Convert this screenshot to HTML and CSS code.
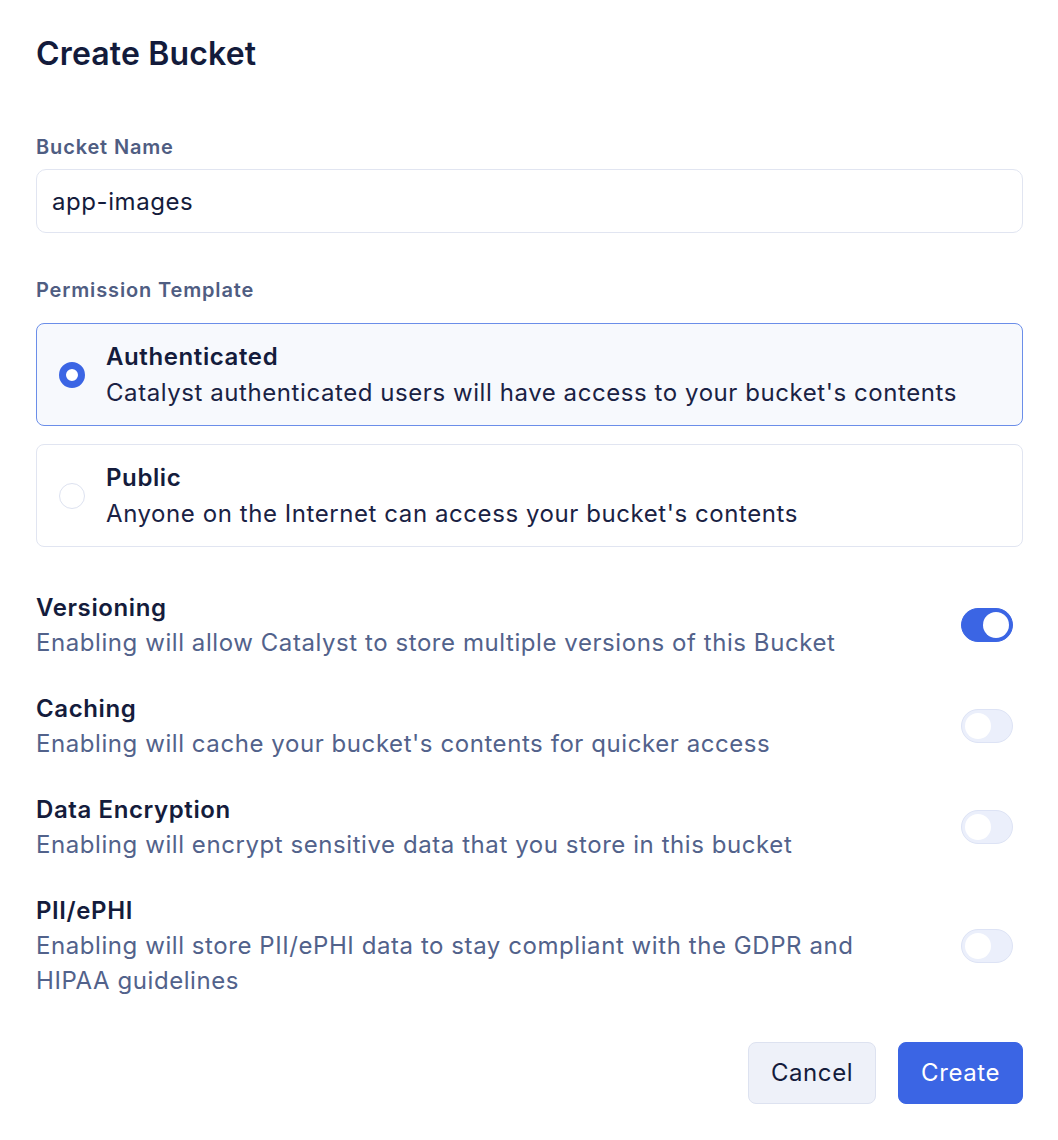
FILE: index.html
```html
<!DOCTYPE html>
<html lang="en">
<head>
  <meta charset="UTF-8">
  <meta name="viewport" content="width=device-width, initial-scale=1.0">
  <title>Create Bucket</title>
  <link rel="stylesheet" href="styles.css">
</head>
<body>
  <div class="dialog">
    <h1 class="title">Create Bucket</h1>

    <label class="field-label name-label" for="bucket-name">Bucket Name</label>
    <input class="text-input" id="bucket-name" type="text" value="app-images">

    <div class="field-label perm-label">Permission Template</div>
    <div class="options">
      <div class="option selected">
        <span class="radio"></span>
        <div class="option-text">
          <div class="option-title">Authenticated</div>
          <div class="option-desc">Catalyst authenticated users will have access to your bucket's contents</div>
        </div>
      </div>
      <div class="option">
        <span class="radio"></span>
        <div class="option-text">
          <div class="option-title">Public</div>
          <div class="option-desc">Anyone on the Internet can access your bucket's contents</div>
        </div>
      </div>
    </div>

    <div class="settings">
      <div class="setting">
        <div class="setting-text">
          <div class="setting-title">Versioning</div>
          <div class="setting-desc">Enabling will allow Catalyst to store multiple versions of this Bucket</div>
        </div>
        <span class="toggle on"><span class="knob"></span></span>
      </div>
      <div class="setting">
        <div class="setting-text">
          <div class="setting-title">Caching</div>
          <div class="setting-desc">Enabling will cache your bucket's contents for quicker access</div>
        </div>
        <span class="toggle"><span class="knob"></span></span>
      </div>
      <div class="setting">
        <div class="setting-text">
          <div class="setting-title">Data Encryption</div>
          <div class="setting-desc">Enabling will encrypt sensitive data that you store in this bucket</div>
        </div>
        <span class="toggle"><span class="knob"></span></span>
      </div>
      <div class="setting">
        <div class="setting-text">
          <div class="setting-title">PII/ePHI</div>
          <div class="setting-desc">Enabling will store PII/ePHI data to stay compliant with the GDPR and HIPAA guidelines</div>
        </div>
        <span class="toggle"><span class="knob"></span></span>
      </div>
    </div>

    <div class="actions">
      <button class="btn btn-cancel">Cancel</button>
      <button class="btn btn-create">Create</button>
    </div>
  </div>
</body>
</html>
```

FILE: styles.css
```css
body {
  margin: 0;
  background-color: #ffffff;
  font-family: Inter, "Noto Sans", sans-serif;
  color: #141c3c;
  letter-spacing: 0.57px;
}

.dialog {
  padding: 34px 35px 36px 36px;
}

.title {
  margin: 0 0 58px 0;
  font-size: 32px;
  line-height: 40px;
  font-weight: 600;
  letter-spacing: 0.15px;
  color: #131b3b;
}

.field-label {
  display: block;
  font-size: 20px;
  line-height: 30px;
  font-weight: 600;
  letter-spacing: 0.85px;
  color: #4f5d82;
}

.name-label {
  margin-top: 1px;
  margin-bottom: 7px;
}

.perm-label {
  margin-top: 42px;
  margin-bottom: 18px;
}

.text-input {
  display: block;
  box-sizing: border-box;
  width: 100%;
  height: 64px;
  margin: 0;
  padding: 13px 15px;
  font-family: inherit;
  font-size: 24px;
  line-height: 36px;
  letter-spacing: 0.57px;
  color: #141c3c;
  border: 1px solid #e1e5f1;
  border-radius: 10px;
  outline: none;
}

.options {
  display: flex;
  flex-direction: column;
  gap: 18px;
}

.option {
  display: flex;
  align-items: center;
  gap: 21px;
  padding: 15px 22px 14px 22px;
  border: 1px solid #e1e5f1;
  border-radius: 8px;
  background-color: #ffffff;
}

.option.selected {
  border-color: #6b8ee9;
  background-color: #f7f9fd;
}

.radio {
  flex: none;
  box-sizing: border-box;
  width: 26px;
  height: 26px;
  border-radius: 50%;
  border: 1px solid #dde2f0;
  background-color: #ffffff;
}

.option.selected .radio {
  border: 7px solid #3b65e4;
}

.option-title {
  font-size: 24px;
  line-height: 36px;
  font-weight: 600;
  letter-spacing: 0.6px;
  color: #141c3c;
}

.option-desc {
  font-size: 24px;
  line-height: 36px;
  color: #1a2244;
}

.settings {
  display: flex;
  flex-direction: column;
  gap: 31px;
  margin-top: 43px;
}

.setting {
  display: flex;
  align-items: center;
  justify-content: space-between;
  gap: 40px;
  padding-right: 10px;
}

.setting-title {
  font-size: 24px;
  line-height: 35px;
  font-weight: 600;
  letter-spacing: 0.6px;
  color: #141c3c;
}

.setting-desc {
  max-width: 840px;
  font-size: 24px;
  line-height: 35px;
  color: #52628b;
}

.toggle {
  flex: none;
  position: relative;
  box-sizing: border-box;
  width: 52px;
  height: 34px;
  border-radius: 17px;
  border: 1px solid #dde3f5;
  background-color: #ebeffb;
}

.toggle .knob {
  position: absolute;
  top: 3px;
  left: 3px;
  width: 26px;
  height: 26px;
  border-radius: 50%;
  background-color: #ffffff;
}

.toggle.on {
  border-color: #3b65e4;
  background-color: #3b65e4;
}

.toggle.on .knob {
  left: 21px;
}

.actions {
  display: flex;
  justify-content: flex-end;
  gap: 22px;
  margin-top: 44px;
}

.btn {
  box-sizing: border-box;
  height: 62px;
  padding: 12px 22px;
  font-family: inherit;
  font-size: 24px;
  line-height: 36px;
  letter-spacing: 0.57px;
  border-radius: 8px;
  cursor: pointer;
}

.btn-cancel {
  background-color: #eef1f9;
  border: 1px solid #dde2f0;
  color: #141c3c;
}

.btn-create {
  background-color: #3b65e4;
  border: 1px solid #3b65e4;
  color: #ffffff;
}
```
